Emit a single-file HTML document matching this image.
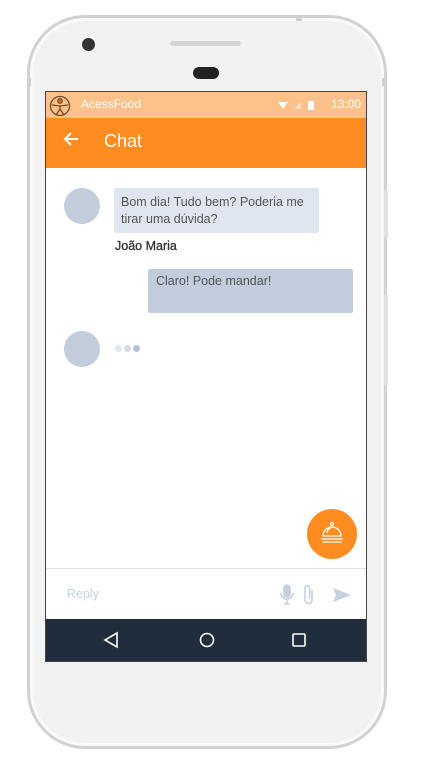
<!DOCTYPE html>
<html><head><style>
*{margin:0;padding:0;box-sizing:border-box}
body{width:424px;height:762px;background:#fff;position:relative;overflow:hidden;font-family:"Liberation Sans",sans-serif}
.a{position:absolute}
</style></head><body>
<div class="a" style="left:27px;top:15px;width:360px;height:734px;border-radius:58px;background:#f2f2f2;border:3px solid #d2d2d2;box-shadow:inset 0 0 0 3px #fafafa"></div>
<div class="a" style="left:296px;top:15px;width:6px;height:6px;background:#d0d0d0"></div>
<div class="a" style="left:27px;top:78px;width:4px;height:8px;background:#d0d0d0"></div>
<div class="a" style="left:382px;top:78px;width:5px;height:8px;background:#d0d0d0"></div>
<div class="a" style="left:384px;top:190px;width:4px;height:48px;background:#e0e0e0"></div>
<div class="a" style="left:384px;top:295px;width:4px;height:90px;background:#e0e0e0"></div>
<div class="a" style="left:82px;top:38px;width:13px;height:13px;border-radius:50%;background:#333"></div>
<div class="a" style="left:170px;top:41px;width:71px;height:5px;border-radius:3px;background:#d6d6d6"></div>
<div class="a" style="left:193px;top:67px;width:26px;height:12px;border-radius:6px;background:#222"></div>
<div class="a" style="left:45px;top:91px;width:322px;height:571px;background:#fff;border:1px solid #444;overflow:hidden">
 <div class="a" style="left:0;top:0;width:322px;height:26px;background:#fec18a"></div>
 <svg class="a" style="left:3px;top:3px" width="22" height="22" viewBox="0 0 22 22" fill="none" stroke="#6b4a2a" stroke-width="1.3"><circle cx="11" cy="11" r="9.5"/><circle cx="11" cy="6" r="2.2" fill="#f07a1a"/><path d="M3 10l8 1 8-1M11 11v3l-4 6M11 14l4 6"/></svg>
 <div class="a" style="left:35px;top:5px;font-size:12px;color:#fff">AcessFood</div>
 <svg class="a" style="left:232px;top:8px" width="40" height="11"><path d="M0 2h10l-5 7z" fill="#fff"/><path d="M16 9h7V2z" fill="#fde0c4"/><rect x="30" y="1" width="6" height="9" fill="#fff"/></svg>
 <div class="a" style="left:285px;top:5px;font-size:12px;color:#fff">13:00</div>
 <div class="a" style="left:0;top:26px;width:322px;height:50px;background:#ff8c21"></div>
 <svg class="a" style="left:17px;top:40px" width="16" height="14" fill="none" stroke="#fff" stroke-width="2"><path d="M15 7H2M8 1L2 7l6 6"/></svg>
 <div class="a" style="left:58px;top:39px;font-size:18px;color:#fff">Chat</div>
 <div class="a" style="left:18px;top:96px;width:36px;height:36px;border-radius:50%;background:#c3cddb"></div>
 <div class="a" style="left:68px;top:96px;width:205px;height:45px;border-radius:2px;background:#e0e6ef;padding:6px 7px;font-size:12.5px;line-height:17px;color:#555">Bom dia! Tudo bem? Poderia me tirar uma dúvida?</div>
 <div class="a" style="left:69px;top:147px;font-size:12.5px;color:#333;-webkit-text-stroke:0.3px #333">João Maria</div>
 <div class="a" style="left:102px;top:177px;width:205px;height:44px;border-radius:2px;background:#c1ccdc;padding:5px 8px;font-size:12.5px;color:#555">Claro! Pode mandar!</div>
 <div class="a" style="left:18px;top:239px;width:36px;height:36px;border-radius:50%;background:#c3cddb"></div>
 <div class="a" style="left:69px;top:253px;width:7px;height:7px;border-radius:50%;background:#e0e6ef"></div>
 <div class="a" style="left:78px;top:253px;width:7px;height:7px;border-radius:50%;background:#d4dbe6"></div>
 <div class="a" style="left:87px;top:253px;width:7px;height:7px;border-radius:50%;background:#b6c2d4"></div>
 <div class="a" style="left:261px;top:417px;width:50px;height:50px;border-radius:50%;background:#ff8c21"></div>
 <svg class="a" style="left:273px;top:428px" width="26" height="26" fill="none" stroke="#fff" stroke-width="1.3"><circle cx="13" cy="4" r="1.5"/><path d="M4 16a9 9 0 0 1 18 0zM8 13a5 5 0 0 1 4-5M2 19h22M3 22h20"/></svg>
 <div class="a" style="left:0;top:476px;width:322px;height:1px;background:#dde3ec"></div>
 <div class="a" style="left:21px;top:495px;font-size:12.5px;color:#c6d0de">Reply</div>
 <svg class="a" style="left:233px;top:492px" width="80" height="22" fill="none" stroke="#c6d0de" stroke-width="1.6"><rect x="5" y="1" width="6" height="12" rx="3" fill="#c6d0de"/><path d="M2 9a6 6 0 0 0 12 0M8 15v4M5 20h6"/><path d="M33 6v10a3.5 3.5 0 0 1-7 0V4a2.3 2.3 0 0 1 4.6 0v11"/><path d="M54 4l18 7-18 7 3-7z" fill="#c6d0de" stroke="none"/></svg>
 <div class="a" style="left:0;top:527px;width:322px;height:44px;background:#1f2d3d"></div>
 <svg class="a" style="left:0;top:527px" width="322" height="44" fill="none" stroke="#fff" stroke-width="1.6"><path d="M71 14l-12 7 12 7z"/><circle cx="161" cy="21" r="6.5"/><rect x="247" y="15" width="12" height="12" rx="1"/></svg>
</div>
</body></html>
